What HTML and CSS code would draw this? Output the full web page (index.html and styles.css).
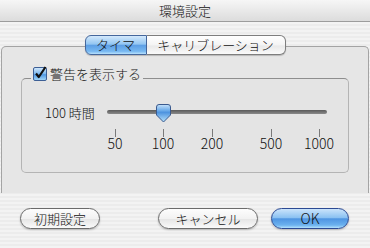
FILE: index.html
```html
<!DOCTYPE html>
<html lang="ja">
<head>
    <meta charset="UTF-8">
    <meta name="viewport" content="width=device-width, initial-scale=1.0">
    <title>環境設定</title>
    <link rel="stylesheet" href="styles.css">
</head>
<body>
    <div class="window">
        <div class="titlebar">環境設定</div>

        <div class="content">
            <div class="tabs">
                <span class="tab selected">タイマ</span>
                <span class="tab">キャリブレーション</span>
            </div>

            <div class="panel">
                <div class="group">
                    <label class="legend">
                        <svg class="checkbox" width="14" height="15" viewBox="0 0 14 15">
                            <defs>
                                <linearGradient id="cb" x1="0" y1="0" x2="0" y2="1">
                                    <stop offset="0" stop-color="#d6eafc"/>
                                    <stop offset="0.5" stop-color="#79b6ee"/>
                                    <stop offset="0.55" stop-color="#4f97e2"/>
                                    <stop offset="1" stop-color="#a8dcfb"/>
                                </linearGradient>
                            </defs>
                            <rect x="0.5" y="1.5" width="13" height="13" rx="1.5" fill="url(#cb)" stroke="#3d5f95"/>
                            <path d="M3 7.5 L5.8 11 L12.5 1" fill="none" stroke="#111" stroke-width="2.2" stroke-linejoin="round"/>
                        </svg>
                        警告を表示する
                    </label>

                    <div class="slider-row">
                        <span class="slider-label">100 時間</span>
                        <div class="slider">
                            <div class="track"></div>
                            <svg class="thumb" width="15" height="19" viewBox="0 0 15 19">
                                <defs>
                                    <linearGradient id="th" x1="0" y1="0" x2="0" y2="1">
                                        <stop offset="0" stop-color="#c7e2fa"/>
                                        <stop offset="0.35" stop-color="#6aaae9"/>
                                        <stop offset="0.45" stop-color="#4d93df"/>
                                        <stop offset="1" stop-color="#b9e4fc"/>
                                    </linearGradient>
                                </defs>
                                <path d="M3 0.5 H12 Q14.5 0.5 14.5 3 V11 L7.5 18 L0.5 11 V3 Q0.5 0.5 3 0.5 Z" fill="url(#th)" stroke="#3b5a8e"/>
                            </svg>
                        </div>
                    </div>

                    <div class="scale">
                        <div class="tick"><i></i><span>50</span></div>
                        <div class="tick"><i></i><span>100</span></div>
                        <div class="tick"><i></i><span>200</span></div>
                        <div class="tick"><i></i><span>500</span></div>
                        <div class="tick"><i></i><span>1000</span></div>
                    </div>
                </div>
            </div>

            <div class="buttons">
                <button class="btn defaults">初期設定</button>
                <span class="spacer"></span>
                <button class="btn cancel">キャンセル</button>
                <button class="btn ok">OK</button>
            </div>
        </div>
    </div>
</body>
</html>
```

FILE: styles.css
```css
body {
    margin: 0;
    font-family: "Noto Sans CJK JP", "Noto Sans", sans-serif;
    font-size: 13px;
    font-weight: 300;
    color: #111;
}

.window {
    width: 370px;
    height: 248px;
    overflow: hidden;
    background: repeating-linear-gradient(#ececec 0, #ececec 2px, #f3f3f3 2px, #f3f3f3 4px);
}

.titlebar {
    height: 21px;
    line-height: 21px;
    text-align: center;
    border-bottom: 1px solid #9c9c9c;
    background: linear-gradient(#f6f6f6, #dcdcdc);
    font-size: 13px;
}

.content {
    padding-top: 13px;
}

.tabs {
    position: relative;
    z-index: 1;
    display: flex;
    justify-content: center;
    margin-bottom: -9px;
}

.tab {
    height: 18px;
    line-height: 18px;
    padding: 0 10px;
    border: 1px solid #7e7e7e;
    background: linear-gradient(#ffffff 0%, #f4f4f4 50%, #e9e9e9 55%, #fafafa 100%);
    box-shadow: 0 1px 1px rgba(0, 0, 0, 0.2);
}

.tab:first-child {
    border-radius: 6px 0 0 6px;
    width: 40px;
    text-align: center;
}

.tab:last-child {
    border-left: none;
    border-radius: 0 6px 6px 0;
    width: 118px;
    text-align: center;
}

.tab.selected {
    border-color: #45679c;
    background: linear-gradient(#d4e9fc 0%, #93c6f2 45%, #5d9fe5 52%, #77b8f1 85%, #b8e2fd 100%);
}

.panel {
    height: 115px;
    margin: 0 1px;
    padding: 31px 19px 0 19px;
    border: 1px solid #a4a4a4;
    border-bottom: none;
    border-radius: 5px 5px 0 0;
    background: #e6e6e6;
}

.group {
    height: 93px;
    border: 1px solid #b4b4b4;
    border-top-color: #8e8e8e;
    border-radius: 5px;
    background: #e4e4e4;
}

.legend {
    display: flex;
    align-items: center;
    gap: 3px;
    width: fit-content;
    height: 15px;
    margin: -13px 0 0 9px;
    padding: 0 2px;
    background: #e6e6e6;
}

.slider-row {
    display: flex;
    align-items: center;
    height: 18px;
    margin-top: 22px;
    padding-left: 23px;
}

.slider-label {
    width: 62px;
}

.slider {
    position: relative;
    width: 220px;
    height: 18px;
    display: flex;
    align-items: center;
}

.track {
    width: 100%;
    height: 4px;
    border-radius: 2px;
    background: linear-gradient(#5a5a5a, #8a8a8a);
}

.thumb {
    position: absolute;
    left: 49px;
    top: 1px;
}

.scale {
    display: grid;
    grid-template-columns: 48px 49px 59px 48px 0;
    margin: 8px 0 0 93px;
}

.tick {
    display: flex;
    flex-direction: column;
    align-items: center;
    width: 40px;
    margin-left: -20px;
}

.tick i {
    display: block;
    width: 1px;
    height: 8px;
    background: #7a7a7a;
}

.tick span {
    font-size: 14px;
    line-height: 13px;
}

.buttons {
    display: flex;
    gap: 13px;
    margin-top: 15px;
    padding: 0 21px 0 20px;
}

.spacer {
    flex: 1;
}

.btn {
    height: 21px;
    padding: 0;
    font-family: inherit;
    font-size: 13px;
    font-weight: 300;
    line-height: 19px;
    color: #111;
    border: 1px solid #6b6b6b;
    border-radius: 11px;
    background: linear-gradient(#fdfdfd 0%, #f2f2f2 50%, #e6e6e6 55%, #fafafa 100%);
    box-shadow: 0 1px 2px rgba(0, 0, 0, 0.25);
}

.defaults {
    width: 80px;
}

.cancel {
    width: 100px;
}

.ok {
    width: 78px;
    font-size: 14px;
    border-color: #2c4a93;
    background: linear-gradient(#cbe4fb 0%, #8cc2f2 45%, #4f95e2 52%, #6cb2ef 85%, #b3e1fd 100%);
}
```
